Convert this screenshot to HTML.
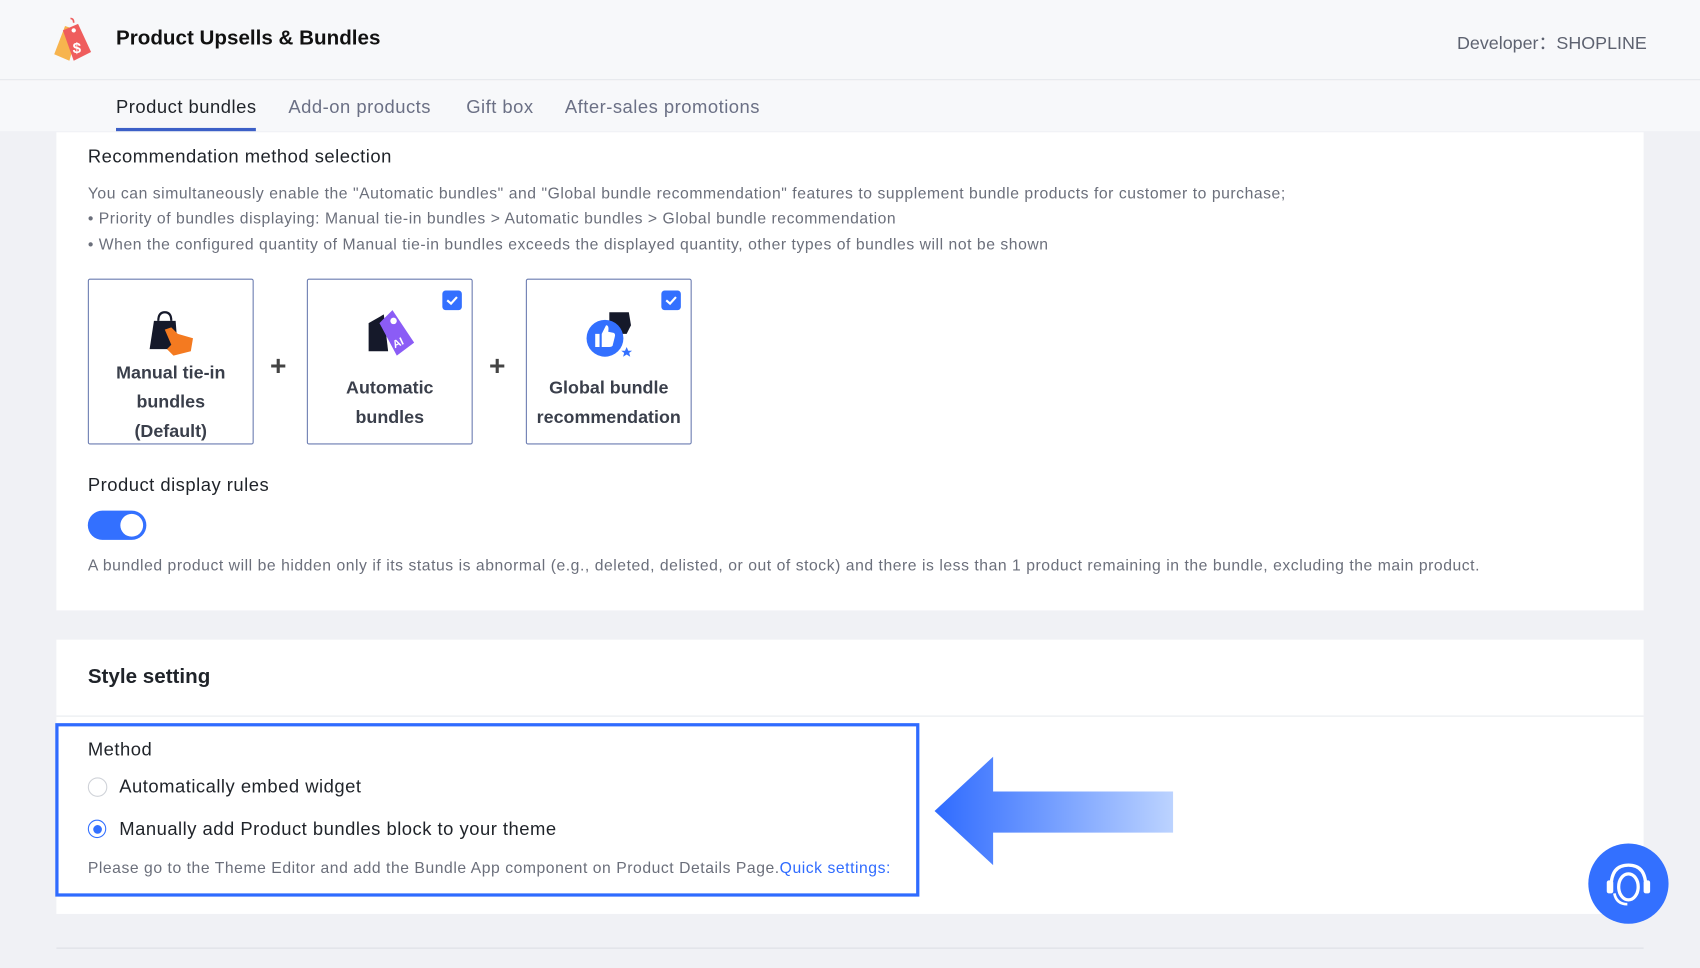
<!DOCTYPE html>
<html><head><meta charset="utf-8">
<style>
html,body{margin:0;padding:0;width:1700px;height:968px;overflow:hidden;background:#f0f1f5;}
#w{position:absolute;left:0;top:0;width:1568px;height:893px;transform:scale(1.08418);transform-origin:0 0;font-family:"Liberation Sans",Arial,sans-serif;color:#1f2329;}
.a{position:absolute;white-space:nowrap;}
.g{color:#6b6f7b;font-size:14.5px;letter-spacing:0.5px;}
.t{font-size:17px;letter-spacing:0.45px;}
.box{position:absolute;top:257px;width:151px;height:151px;border:1.5px solid #6a7bb0;border-radius:2px;background:#fff;text-align:center;font-size:16.5px;font-weight:bold;color:#3a3f4b;line-height:27px;}
.cb{position:absolute;right:9px;top:10px;width:18px;height:18px;background:#3370ff;border-radius:3px;}
.plus{position:absolute;top:322px;font-size:26px;font-weight:bold;color:#444;}
</style></head><body><div id="w">
<div class="a" style="left:0;top:0;width:1568px;height:121px;background:#f7f8fa;"></div>
<div class="a" style="left:0;top:73px;width:1568px;height:1px;background:#e6e8ec;"></div>
<svg class="a" style="left:46px;top:16px" width="44" height="42" viewBox="0 0 44 42">
<path d="M14 8 L4 34 L18 40 L26 12Z" fill="#f7b44e"/>
<path d="M12 12 L26 6 L38 32 L22 40Z" fill="#ef5d5d"/>
<circle cx="22" cy="12" r="2" fill="#fff"/>
<path d="M22 5 Q22 1 19 1" stroke="#ef5d5d" stroke-width="1.5" fill="none"/>
<text x="21" y="33" font-size="14" font-weight="bold" fill="#fff" font-family="Liberation Sans">$</text>
</svg>
<div class="a" style="left:107px;top:25px;font-size:19px;font-weight:bold;color:#111;">Product Upsells &amp; Bundles</div>
<div class="a" style="right:49px;top:26px;font-size:16.5px;color:#5d6270;">Developer：SHOPLINE</div>
<div class="a t" style="left:107px;top:89px;color:#1f2329;">Product bundles</div>
<div class="a" style="left:107px;top:118px;width:129px;height:3px;background:#3c5fc7;"></div>
<div class="a t" style="left:266px;top:89px;color:#6b7085;">Add-on products</div>
<div class="a t" style="left:430px;top:89px;color:#6b7085;">Gift box</div>
<div class="a t" style="left:521px;top:89px;color:#6b7085;">After-sales promotions</div>
<div class="a" style="left:52px;top:122px;width:1464px;height:441px;background:#fff;"></div>
<div class="a t" style="left:81px;top:135px;color:#1f2329;">Recommendation method selection</div>
<div class="a g" style="left:81px;top:171px;">You can simultaneously enable the "Automatic bundles" and "Global bundle recommendation" features to supplement bundle products for customer to purchase;</div>
<div class="a g" style="left:81px;top:194px;">• Priority of bundles displaying: Manual tie-in bundles &gt; Automatic bundles &gt; Global bundle recommendation</div>
<div class="a g" style="left:81px;top:218px;">• When the configured quantity of Manual tie-in bundles exceeds the displayed quantity, other types of bundles will not be shown</div>
<div class="box" style="left:81px;">
<svg style="position:absolute;left:52px;top:28px" width="48" height="44" viewBox="0 0 48 44"><path d="M8 10 L28 10 L30 36 L4 36Z" fill="#15192a"/><path d="M12 10 Q12 2 18 2 Q24 2 24 10" stroke="#15192a" stroke-width="2" fill="none"/><path d="M18 18 L24 16 L30 22 L44 26 L42 38 L26 42 L20 36 L24 32Z" fill="#f47a20"/></svg>
<div style="position:absolute;left:0;right:0;top:73px">Manual tie-in<br>bundles<br>(Default)</div></div>
<div class="plus" style="left:249px;">+</div>
<div class="box" style="left:283px;"><div class="cb"><svg width="18" height="18"><path d="M4.5 9 L8 12 L13.5 6" stroke="#fff" stroke-width="2" fill="none"/></svg></div>
<svg style="position:absolute;left:52px;top:26px" width="50" height="46" viewBox="0 0 50 46"><path d="M4 14 L18 6 L22 40 L4 40Z" fill="#15192a"/><path d="M14 14 L26 2 L46 32 L30 44Z" fill="#8b5cf6"/><circle cx="27" cy="12" r="3" fill="#fff"/><text x="26" y="36" font-size="10" font-weight="bold" fill="#fff" font-family="Liberation Sans" transform="rotate(-25 30 32)">AI</text></svg>
<div style="position:absolute;left:0;right:0;top:87px">Automatic<br>bundles</div></div>
<div class="plus" style="left:451px;">+</div>
<div class="box" style="left:485px;"><div class="cb"><svg width="18" height="18"><path d="M4.5 9 L8 12 L13.5 6" stroke="#fff" stroke-width="2" fill="none"/></svg></div>
<svg style="position:absolute;left:52px;top:28px" width="50" height="46" viewBox="0 0 50 46"><path d="M24 2 L42 2 L44 14 L40 22 L24 22Z" fill="#15192a"/><circle cx="20" cy="26" r="17" fill="#3370ff"/><path d="M11 22 L15 22 L15 34 L11 34Z M17 34 L17 22 L21 14 Q24 14 23 20 L28 21 Q30 22 29 25 L27 33 Q26 34 24 34Z" fill="#fff"/><path d="M40 34 L41.5 37.5 L45 37.5 L42.3 39.5 L43.3 43 L40 41 L36.7 43 L37.7 39.5 L35 37.5 L38.5 37.5Z" fill="#3370ff"/></svg>
<div style="position:absolute;left:0;right:0;top:87px">Global bundle<br>recommendation</div></div>
<div class="a t" style="left:81px;top:438px;color:#1f2329;">Product display rules</div>
<div class="a" style="left:81px;top:471px;width:54px;height:27px;border-radius:14px;background:#3370ff;"><div style="position:absolute;right:3px;top:3px;width:21px;height:21px;border-radius:50%;background:#fff;"></div></div>
<div class="a g" style="left:81px;top:514px;">A bundled product will be hidden only if its status is abnormal (e.g., deleted, delisted, or out of stock) and there is less than 1 product remaining in the bundle, excluding the main product.</div>
<div class="a" style="left:52px;top:590px;width:1464px;height:253px;background:#fff;"></div>
<div class="a" style="left:81px;top:614px;font-size:19px;font-weight:bold;color:#1f2329;">Style setting</div>
<div class="a" style="left:52px;top:660px;width:1464px;height:1px;background:#e8eaee;"></div>
<div class="a" style="left:51px;top:667px;width:791px;height:154px;border:3px solid #2f6bff;"></div>
<div class="a t" style="left:81px;top:682px;color:#1f2329;">Method</div>
<div class="a" style="left:81px;top:717px;width:16px;height:16px;border:1px solid #cfd2d8;border-radius:50%;"></div>
<div class="a t" style="left:110px;top:716px;color:#1f2329;">Automatically embed widget</div>
<div class="a" style="left:81px;top:756px;width:15px;height:15px;border:1.5px solid #3370ff;border-radius:50%;"><div style="position:absolute;left:3.5px;top:3.5px;width:8px;height:8px;border-radius:50%;background:#3370ff;"></div></div>
<div class="a t" style="left:110px;top:755px;color:#1f2329;">Manually add Product bundles block to your theme</div>
<div class="a g" style="left:81px;top:793px;">Please go to the Theme Editor and add the Bundle App component on Product Details Page.<span style="color:#2f6bff">Quick settings:</span></div>
<svg class="a" style="left:860px;top:696px" width="225" height="104" viewBox="0 0 225 104">
<defs><linearGradient id="gr" x1="0" x2="1"><stop offset="0" stop-color="#2f6bff"/><stop offset="1" stop-color="#bcd3ff"/></linearGradient></defs>
<path d="M2 52 L56 2 L56 34 L222 34 L222 72 L56 72 L56 102Z" fill="url(#gr)"/></svg>
<div class="a" style="left:1465px;top:778px;width:74px;height:74px;border-radius:50%;background:#3370ff;">
<svg width="74" height="74" viewBox="0 0 74 74"><path d="M21 40 Q21 20 37 20 Q53 20 53 40" stroke="#fff" stroke-width="3" fill="none"/><rect x="17" y="34" width="6" height="12" rx="2" fill="#fff"/><rect x="51" y="34" width="6" height="12" rx="2" fill="#fff"/><ellipse cx="37" cy="40" rx="9" ry="12" fill="none" stroke="#fff" stroke-width="3"/><path d="M24 46 Q26 56 36 56" stroke="#fff" stroke-width="2.5" fill="none"/></svg></div>
<div class="a" style="left:52px;top:874px;width:1464px;height:1px;background:#dcdfe4;"></div>
</div></body></html>
